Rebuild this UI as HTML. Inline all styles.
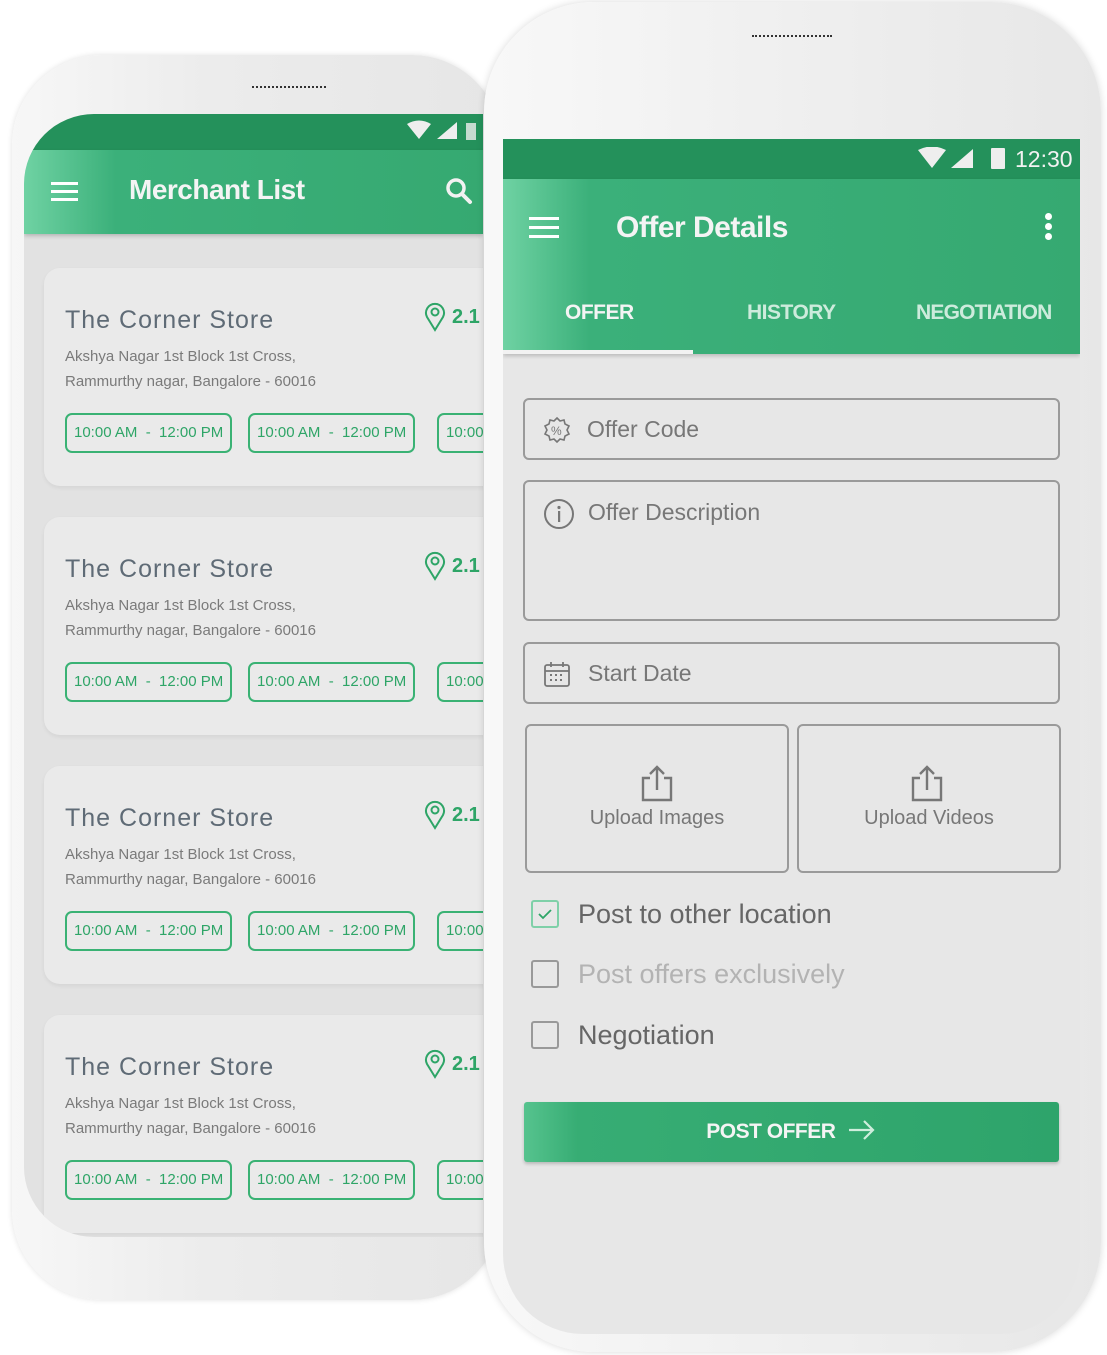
<!DOCTYPE html>
<html><head><meta charset="utf-8"><style>
*{box-sizing:border-box;margin:0;padding:0}
body{width:1107px;height:1355px;background:#fff;position:relative;overflow:hidden;font-family:"Liberation Sans",sans-serif}
.abs{position:absolute}
.lphone{left:12px;top:55px;width:490px;height:1245px;border-radius:90px;background:linear-gradient(90deg,#f7f7f7,#ececec 40%,#e6e6e6);box-shadow:0 0 6px rgba(0,0,0,.12)}
.lscreen{left:24px;top:114px;width:459px;height:1123px;border-radius:70px 0 0 70px;overflow:hidden;background:#e2e2e2}
.card{position:absolute;left:20px;width:480px;height:218px;background:#eaeaea;border-radius:16px;box-shadow:0 2px 4px rgba(0,0,0,.06)}
.card .t{position:absolute;left:21px;top:38px;font-size:25px;color:#5f6b76;letter-spacing:1px}
.card .a{position:absolute;left:21px;top:76px;font-size:15px;color:#7a7a7a;line-height:25px}
.card .d{position:absolute;left:380px;top:34px;color:#2ea567;font-size:20px;font-weight:bold;display:flex;align-items:center;gap:6px}
.pill{position:absolute;top:145px;height:40px;border:2px solid #3ab274;border-radius:7px;color:#2ea567;font-size:15px;line-height:36px;padding:0 7px;white-space:nowrap}
.rphone{left:484px;top:2px;width:617px;height:1350px;border-radius:110px;background:linear-gradient(90deg,#f8f8f8,#efefef 50%,#e7e7e7);box-shadow:0 0 8px rgba(0,0,0,.15)}
.rscreen{left:503px;top:139px;width:577px;height:1195px;background:#e7e7e7;border-radius:0 0 80px 80px;overflow:hidden}
.field{position:absolute;left:20px;width:537px;border:2px solid #9a9a9a;border-radius:6px;color:#777;font-size:23px}
.cb{position:absolute;left:28px;width:28px;height:28px;border:2px solid #999;border-radius:3px}
.cbl{position:absolute;left:75px;font-size:27px;color:#666}
</style></head><body>
<div class="abs lphone"></div>
<div class="abs" style="left:252px;top:86px;width:74px;height:3px;border-top:2px dotted #333"></div>
<div class="abs lscreen">
  <div class="abs" style="left:0;top:0;width:459px;height:36px;background:#24915b"></div>
  <div class="abs" style="left:0;top:36px;width:459px;height:84px;background:linear-gradient(90deg,#6fd2a3,#3bb07a 20%,#36a971);box-shadow:0 2px 4px rgba(0,0,0,.2)"></div>
  <svg class="abs" style="left:380px;top:6px" width="80" height="22"><path d="M3 4 Q15 -3 27 4 L15 19 Z" fill="#eee"/><path d="M33 19 L53 2 V19 Z" fill="#eee"/><rect x="62" y="3" width="10" height="17" fill="#eee" opacity=".8"/></svg>
  <div class="abs" style="left:27px;top:68px;width:27px;height:3px;background:#fff;box-shadow:0 8px 0 #fff,0 16px 0 #fff"></div>
  <div class="abs" style="left:105px;top:60px;font-size:28px;color:#f4f4f4;font-weight:bold;letter-spacing:-.5px">Merchant List</div>
  <svg class="abs" style="left:420px;top:62px" width="30" height="30"><circle cx="12" cy="12" r="8" fill="none" stroke="#f2f2f2" stroke-width="3.5"/><path d="M18 18 L26 26" stroke="#f2f2f2" stroke-width="4" stroke-linecap="round"/></svg>
  <div class="card" style="top:154px">
    <div class="t">The Corner Store</div><div class="a">Akshya Nagar 1st Block 1st Cross,<br>Rammurthy nagar, Bangalore - 60016</div>
    <div class="d"><svg width="22" height="30"><path d="M11 28 L3 15 A9 9 0 1 1 19 15 Z" fill="none" stroke="#2ea567" stroke-width="2"/><circle cx="11" cy="10" r="3.5" fill="none" stroke="#2ea567" stroke-width="2"/></svg>2.1</div>
    <div class="pill" style="left:21px">10:00 AM&nbsp; - &nbsp;12:00 PM</div><div class="pill" style="left:204px">10:00 AM&nbsp; - &nbsp;12:00 PM</div><div class="pill" style="left:393px">10:00 AM</div>
  </div>
  <div class="card" style="top:403px">
    <div class="t">The Corner Store</div><div class="a">Akshya Nagar 1st Block 1st Cross,<br>Rammurthy nagar, Bangalore - 60016</div>
    <div class="d"><svg width="22" height="30"><path d="M11 28 L3 15 A9 9 0 1 1 19 15 Z" fill="none" stroke="#2ea567" stroke-width="2"/><circle cx="11" cy="10" r="3.5" fill="none" stroke="#2ea567" stroke-width="2"/></svg>2.1</div>
    <div class="pill" style="left:21px">10:00 AM&nbsp; - &nbsp;12:00 PM</div><div class="pill" style="left:204px">10:00 AM&nbsp; - &nbsp;12:00 PM</div><div class="pill" style="left:393px">10:00 AM</div>
  </div>
  <div class="card" style="top:652px">
    <div class="t">The Corner Store</div><div class="a">Akshya Nagar 1st Block 1st Cross,<br>Rammurthy nagar, Bangalore - 60016</div>
    <div class="d"><svg width="22" height="30"><path d="M11 28 L3 15 A9 9 0 1 1 19 15 Z" fill="none" stroke="#2ea567" stroke-width="2"/><circle cx="11" cy="10" r="3.5" fill="none" stroke="#2ea567" stroke-width="2"/></svg>2.1</div>
    <div class="pill" style="left:21px">10:00 AM&nbsp; - &nbsp;12:00 PM</div><div class="pill" style="left:204px">10:00 AM&nbsp; - &nbsp;12:00 PM</div><div class="pill" style="left:393px">10:00 AM</div>
  </div>
  <div class="card" style="top:901px">
    <div class="t">The Corner Store</div><div class="a">Akshya Nagar 1st Block 1st Cross,<br>Rammurthy nagar, Bangalore - 60016</div>
    <div class="d"><svg width="22" height="30"><path d="M11 28 L3 15 A9 9 0 1 1 19 15 Z" fill="none" stroke="#2ea567" stroke-width="2"/><circle cx="11" cy="10" r="3.5" fill="none" stroke="#2ea567" stroke-width="2"/></svg>2.1</div>
    <div class="pill" style="left:21px">10:00 AM&nbsp; - &nbsp;12:00 PM</div><div class="pill" style="left:204px">10:00 AM&nbsp; - &nbsp;12:00 PM</div><div class="pill" style="left:393px">10:00 AM</div>
  </div>
</div>

<div class="abs rphone"></div>
<div class="abs" style="left:752px;top:35px;width:80px;height:3px;border-top:2px dotted #333"></div>
<div class="abs rscreen">
  <div class="abs" style="left:0;top:0;width:577px;height:40px;background:#24915b"></div>
  <svg class="abs" style="left:412px;top:8px" width="100" height="24"><path d="M3 3 Q17 -4 31 3 L17 21 Z" fill="#eee"/><path d="M36 21 L58 2 V21 Z" fill="#eee"/><rect x="76" y="1" width="14" height="21" rx="1" fill="#eee"/></svg>
  <div class="abs" style="left:512px;top:7px;font-size:23px;color:#f2f2f2">12:30</div>
  <div class="abs" style="left:0;top:40px;width:577px;height:175px;background:linear-gradient(90deg,#6fd2a3,#3bb07a 15%,#36a971);box-shadow:0 2px 4px rgba(0,0,0,.2)"></div>
  <div class="abs" style="left:26px;top:78px;width:30px;height:3px;background:#fff;box-shadow:0 9px 0 #fff,0 18px 0 #fff"></div>
  <div class="abs" style="left:113px;top:72px;font-size:30px;color:#f4f4f4;font-weight:bold;letter-spacing:-.5px">Offer Details</div>
  <div class="abs" style="left:542px;top:74px;width:7px;height:7px;border-radius:50%;background:#fff;box-shadow:0 10px 0 #fff,0 20px 0 #fff"></div>
  <div class="abs" style="left:62px;top:162px;font-size:21px;color:#f4f4f4;font-weight:bold;letter-spacing:-.5px">OFFER</div>
  <div class="abs" style="left:244px;top:162px;font-size:21px;color:#cdebdc;font-weight:bold;letter-spacing:-.5px">HISTORY</div>
  <div class="abs" style="left:413px;top:162px;font-size:21px;color:#cdebdc;font-weight:bold;letter-spacing:-.8px">NEGOTIATION</div>
  <div class="abs" style="left:0;top:211px;width:190px;height:4px;background:#f2f2f2"></div>

  <div class="field" style="top:259px;height:62px"><svg class="abs" style="left:18px;top:16px" width="28" height="28"><path d="M14 2 L17 5 L21 4 L22 8 L26 10 L24 14 L26 18 L22 20 L21 24 L17 23 L14 26 L11 23 L7 24 L6 20 L2 18 L4 14 L2 10 L6 8 L7 4 L11 5 Z" fill="none" stroke="#777" stroke-width="1.6"/><text x="8" y="19" font-size="12" fill="#777" font-family="Liberation Sans">%</text></svg><span class="abs" style="left:62px;top:16px">Offer Code</span></div>
  <div class="field" style="top:341px;height:141px"><svg class="abs" style="left:18px;top:16px" width="32" height="32"><circle cx="16" cy="16" r="14" fill="none" stroke="#777" stroke-width="2"/><circle cx="16" cy="9.5" r="1.6" fill="#777"/><rect x="15" y="13" width="2.2" height="11" fill="#777"/></svg><span class="abs" style="left:63px;top:17px">Offer Description</span></div>
  <div class="field" style="top:503px;height:62px"><svg class="abs" style="left:18px;top:16px" width="28" height="28"><rect x="2" y="5" width="24" height="21" rx="2" fill="none" stroke="#777" stroke-width="1.8"/><path d="M2 11 H26 M8 2 V7 M20 2 V7" stroke="#777" stroke-width="1.8"/><path d="M7 15 h2 M12 15 h2 M17 15 h2 M7 20 h2 M12 20 h2 M17 20 h2" stroke="#777" stroke-width="2"/></svg><span class="abs" style="left:63px;top:16px">Start Date</span></div>
  <div class="field" style="top:585px;width:264px;height:149px;left:22px;font-size:20px;text-align:center"><svg class="abs" style="left:112px;top:38px" width="36" height="38"><path d="M11 14 H4 V36 H32 V14 H25" fill="none" stroke="#777" stroke-width="2.4"/><path d="M18 26 V3 M11 10 L18 3 L25 10" fill="none" stroke="#777" stroke-width="2.4"/></svg><span class="abs" style="left:0;width:260px;top:81px">Upload Images</span></div>
  <div class="field" style="top:585px;width:264px;height:149px;left:294px;font-size:20px;text-align:center"><svg class="abs" style="left:110px;top:38px" width="36" height="38"><path d="M11 14 H4 V36 H32 V14 H25" fill="none" stroke="#777" stroke-width="2.4"/><path d="M18 26 V3 M11 10 L18 3 L25 10" fill="none" stroke="#777" stroke-width="2.4"/></svg><span class="abs" style="left:0;width:260px;top:81px">Upload Videos</span></div>

  <div class="cb" style="top:761px;border-color:#7fd0a8"><svg width="24" height="24"><path d="M6 12 L10 16 L18 8" fill="none" stroke="#2ea567" stroke-width="1.8"/></svg></div>
  <div class="cbl" style="top:760px">Post to other location</div>
  <div class="cb" style="top:821px"></div>
  <div class="cbl" style="top:820px;color:#b3b3b3">Post offers exclusively</div>
  <div class="cb" style="top:882px"></div>
  <div class="cbl" style="top:881px">Negotiation</div>

  <div class="abs" style="left:21px;top:963px;width:535px;height:60px;background:linear-gradient(90deg,#56c38e,#37ad74 10%,#2ea46b);border-radius:3px;box-shadow:0 2px 3px rgba(0,0,0,.2);text-align:center;color:#f4f4f4;font-weight:bold;font-size:21px;line-height:60px;letter-spacing:-.5px">POST OFFER <svg width="30" height="22" style="vertical-align:-3px;margin-left:6px"><path d="M2 11 H26 M17 2 L26 11 L17 20" fill="none" stroke="#cfeedd" stroke-width="2.2"/></svg></div>
</div>
</body></html>
